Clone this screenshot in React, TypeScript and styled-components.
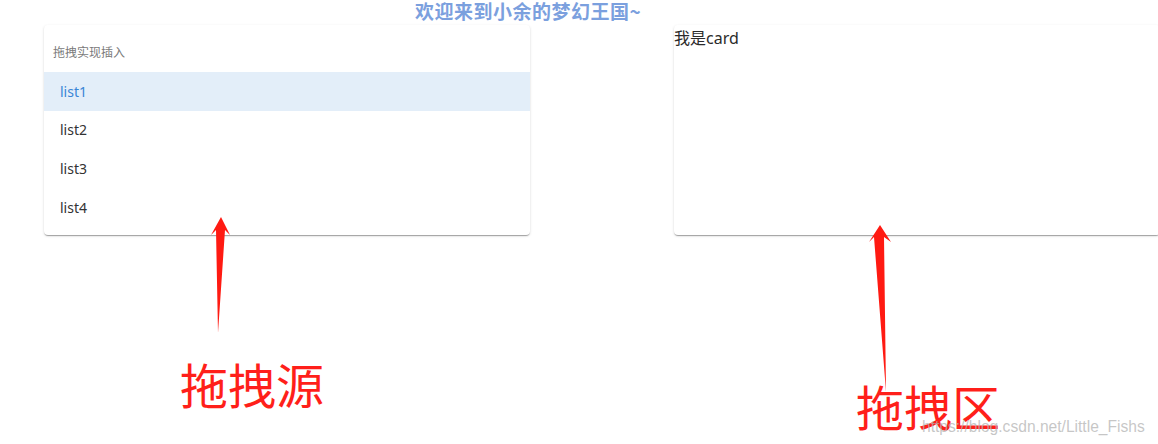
import React from 'react';
import styled, { createGlobalStyle } from 'styled-components';

const GlobalStyle = createGlobalStyle`
  html, body {
    margin: 0;
    padding: 0;
    background: #fff;
  }
  body {
    font-family: "Noto Sans", "Noto Sans CJK SC", sans-serif;
  }
`;

const Page = styled.div`
  position: relative;
  width: 1158px;
  height: 444px;
  overflow: hidden;
  background: #fff;
`;

const TitleBar = styled.div`
  width: 1056px;
  text-align: center;
`;

const Title = styled.h1`
  margin: 0;
  font-family: "Noto Sans CJK SC", sans-serif;
  font-size: 19px;
  line-height: 22px;
  font-weight: 700;
  color: #7ba0de;
  letter-spacing: 0.5px;
`;

const Columns = styled.div`
  display: grid;
  grid-template-columns: 486px 486px;
  column-gap: 144px;
  padding-left: 44px;
  margin-top: 3px;
`;

const Paper = styled.div`
  background: #fff;
  border-radius: 4px;
  height: 210px;
  box-shadow: 0 2px 1px -1px rgba(0, 0, 0, 0.2), 0 1px 1px 0 rgba(0, 0, 0, 0.14),
    0 1px 3px 0 rgba(0, 0, 0, 0.12);
  box-sizing: border-box;
`;

const List = styled.ul`
  list-style: none;
  margin: 0;
  padding: 0 0 9px;
`;

const SubHeader = styled.li`
  height: 47px;
  padding: 14px 9px 0;
  box-sizing: border-box;
  font-family: "Noto Sans CJK SC", sans-serif;
  font-size: 12px;
  line-height: 26px;
  color: #7a7a7a;
`;

const Item = styled.li<{ $active?: boolean }>`
  height: 38.6px;
  display: flex;
  align-items: center;
  padding: 0 16px;
  font-family: "Noto Sans", "Noto Sans CJK SC", sans-serif;
  font-size: 14px;
  color: ${(p) => (p.$active ? '#3a85d6' : '#333')};
  background: ${(p) => (p.$active ? '#e3eef9' : 'transparent')};
`;

const CardText = styled.div`
  font-family: "Noto Sans", "Noto Sans CJK SC", sans-serif;
  font-size: 16px;
  line-height: 26px;
  color: #2b2b2b;
`;

const Notes = styled.svg`
  position: absolute;
  left: 0;
  top: 0;
  pointer-events: none;
`;

const Label = styled.div<{ $x: number; $y: number }>`
  position: absolute;
  left: ${(p) => p.$x}px;
  top: ${(p) => p.$y}px;
  font-family: "Noto Sans CJK SC", sans-serif;
  font-size: 48px;
  line-height: 60px;
  color: #ff1f1a;
`;

const Watermark = styled.div`
  position: absolute;
  left: 922px;
  top: 417px;
  font-family: "Liberation Sans", Arial, sans-serif;
  font-size: 15.6px;
  line-height: 20px;
  color: rgba(180, 180, 180, 0.75);
`;

const items = ['list1', 'list2', 'list3', 'list4'];

export default function App() {
  return (
    <Page>
      <GlobalStyle />
      <TitleBar>
        <Title>欢迎来到小余的梦幻王国~</Title>
      </TitleBar>
      <Columns>
        <Paper>
          <List>
            <SubHeader>拖拽实现插入</SubHeader>
            {items.map((name, i) => (
              <Item key={name} $active={i === 0}>
                {name}
              </Item>
            ))}
          </List>
        </Paper>
        <Paper>
          <CardText>我是card</CardText>
        </Paper>
      </Columns>

      <Notes width="1158" height="444" viewBox="0 0 1158 444">
        <polygon
          points="221,217 230,235 225,230 218,333 216,230 211,235"
          fill="#ff1a12"
        />
        <polygon
          points="880,225 891,242 884,237 886,392 874,237 869,242"
          fill="#ff1a12"
        />
      </Notes>
      <Label $x={180} $y={353}>拖拽源</Label>
      <Label $x={856} $y={375}>拖拽区</Label>
      <Watermark>https://blog.csdn.net/Little_Fishs</Watermark>
    </Page>
  );
}
